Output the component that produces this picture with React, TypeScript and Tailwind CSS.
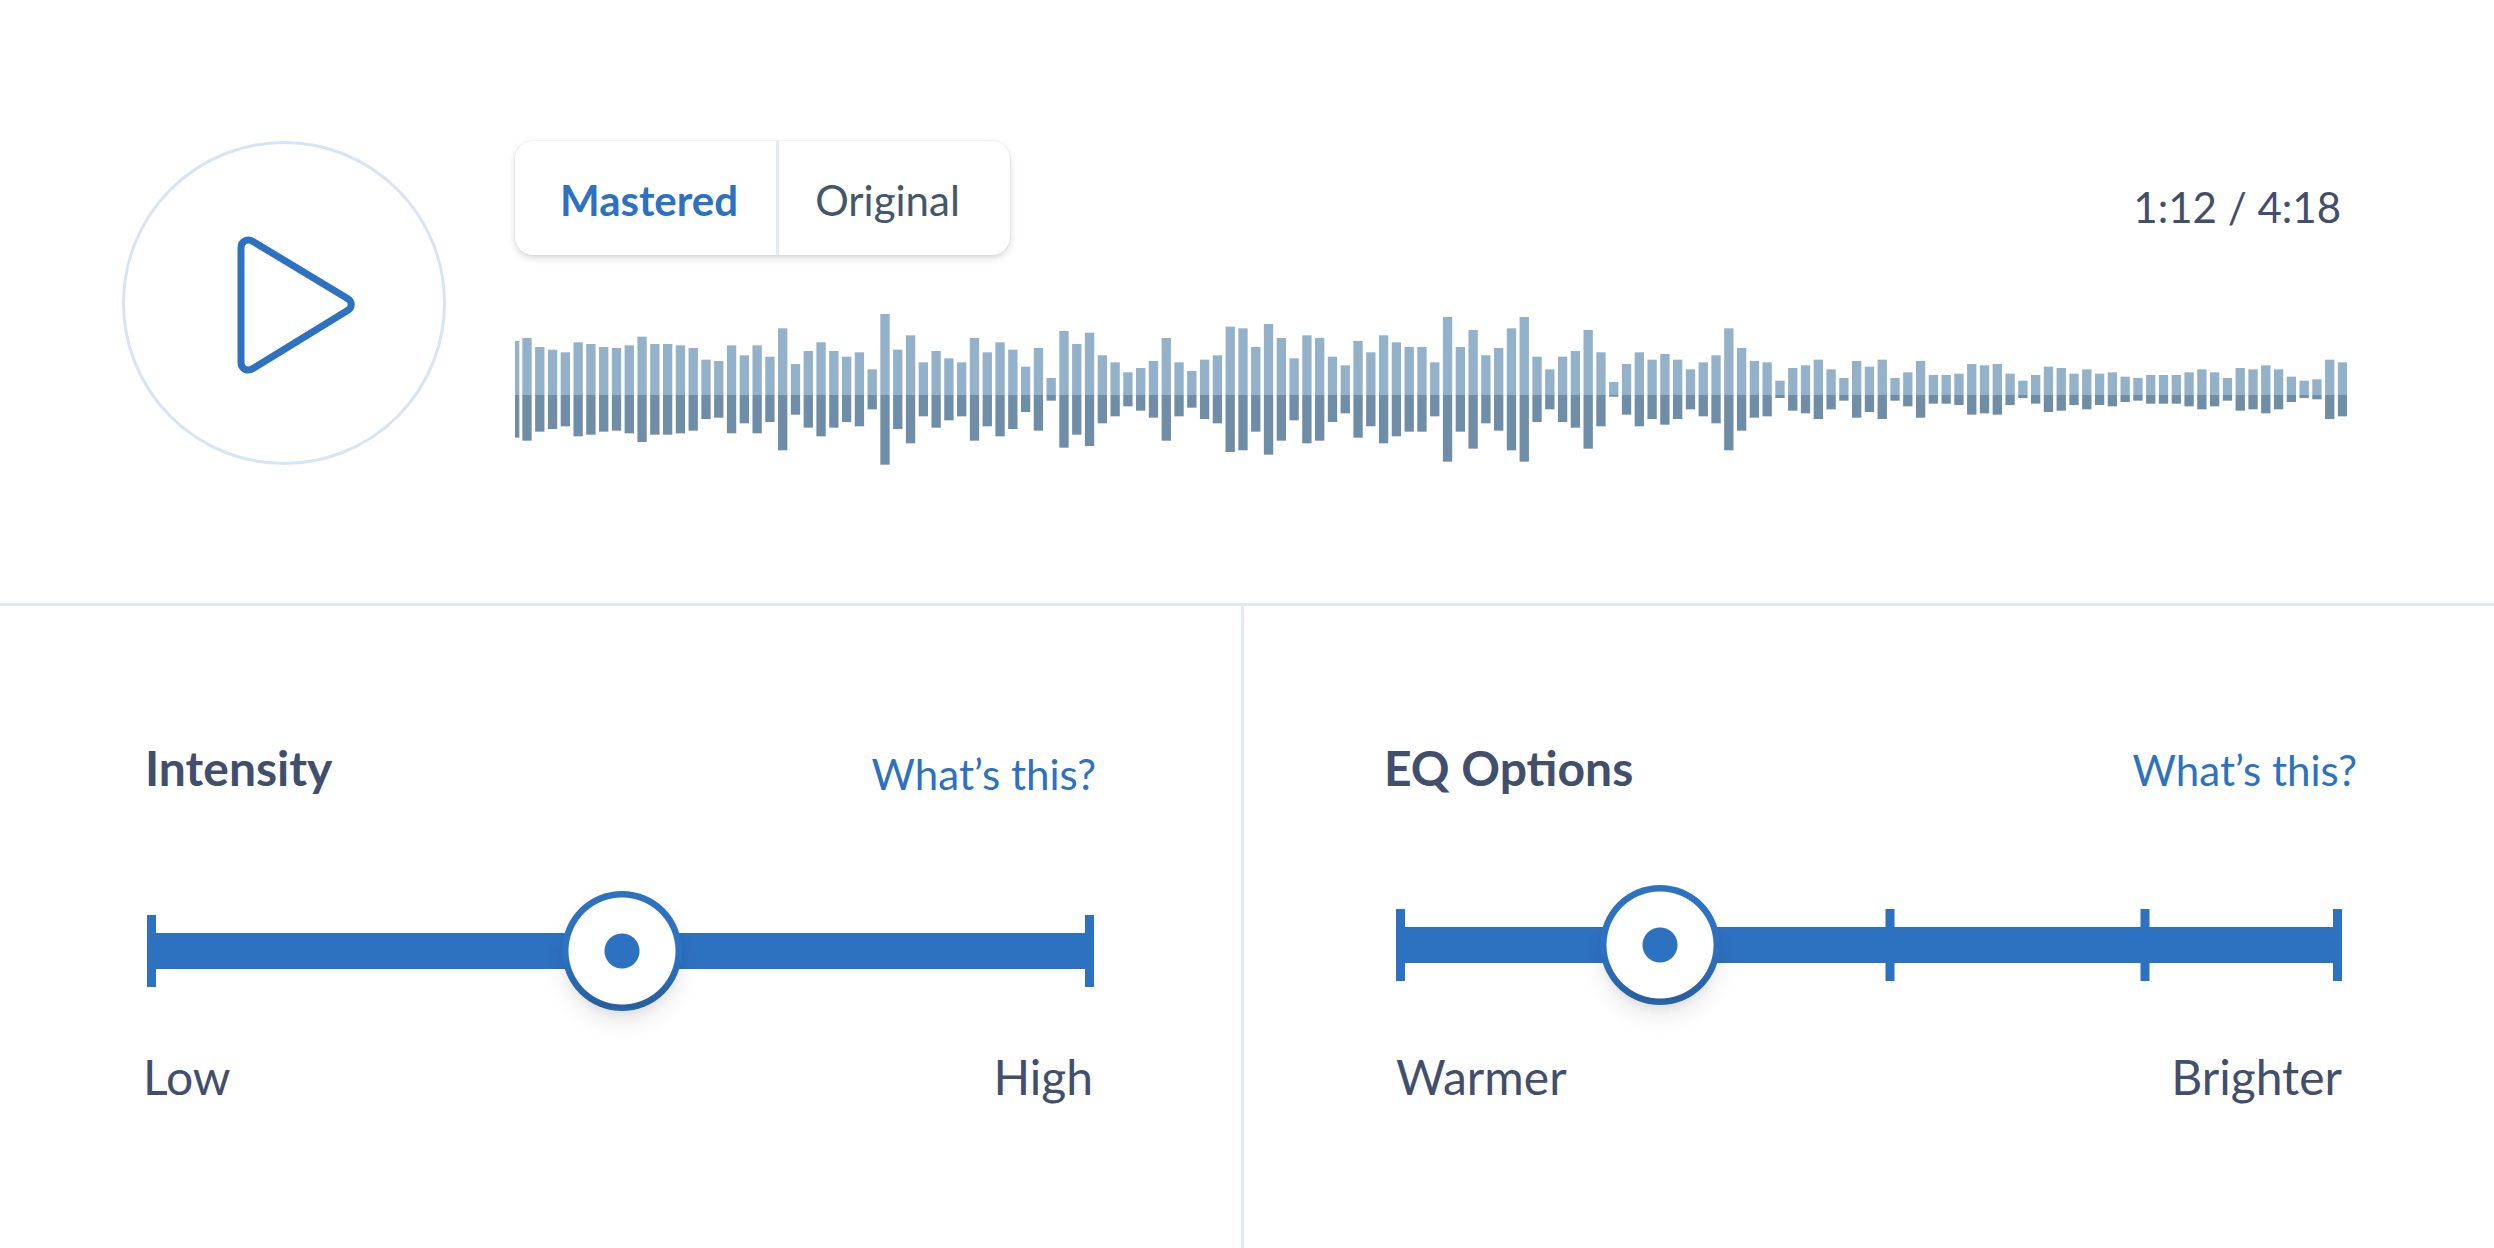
import React, { useState } from "react";

// Top edge of every bar in waveform units; the centre line lies at BASELINE.
const PEAKS = [
  115, 142, 150, 158, 128, 133, 142, 145, 137, 111, 133, 133, 137, 145, 180, 184, 137, 167, 137, 171,
  86, 193, 154, 128, 154, 171, 158, 209, 43, 150, 107, 188, 154, 176, 188, 115, 158, 128, 150, 201,
  145, 235, 94, 133, 99, 167, 188, 218, 205, 184, 115, 188, 214, 180, 167, 81, 86, 142, 73, 115,
  176, 107, 115, 171, 197, 124, 158, 107, 128, 142, 142, 188, 52, 142, 91, 167, 145, 86, 52, 171,
  209, 171, 154, 91, 158, 247, 193, 158, 180, 163, 180, 209, 188, 167, 86, 145, 184, 188, 243, 205,
  197, 180, 209, 235, 184, 201, 180, 235, 218, 184, 226, 226, 222, 193, 197, 193, 222, 243, 226, 201,
  205, 222, 209, 222, 218, 231, 235, 226, 226, 226, 218, 209, 218, 235, 205, 209, 197, 209, 231, 243,
  239, 180, 188,
];
const BASELINE = 286;
const MIRROR_LOSS = 34;
const PITCH = 38.37;

function Bar({ x, width, top }: { x: number; width: number; top: number }) {
  const up = BASELINE - top;
  return (
    <>
      <rect x={x} y={top} width={width} height={up} fill="#94b1ca" />
      <rect x={x} y={BASELINE} width={width} height={up - MIRROR_LOSS} fill="#6f8da7" />
    </>
  );
}

function Waveform() {
  return (
    <svg
      viewBox="0 40 5498 456"
      preserveAspectRatio="none"
      className="block h-[152px] w-full"
      role="img"
      aria-label="Waveform"
    >
      <Bar x={0} width={13} top={124} />
      {PEAKS.map((top, i) => (
        <Bar key={i} x={22 + i * PITCH} width={28} top={top} />
      ))}
    </svg>
  );
}

type SliderProps = { id: string; initial: number; stops?: number[] };

function Slider({ id, initial, stops = [] }: SliderProps) {
  const [value, setValue] = useState(initial);
  return (
    <div className="relative flex h-[120px] items-center">
      <div className="flex h-[72px] w-full items-center justify-between">
        <span className="h-full w-[9px] bg-[#2d71c1]" />
        <span className="h-9 flex-1 bg-[#2d71c1]" />
        <span className="h-full w-[9px] bg-[#2d71c1]" />
      </div>
      {stops.map((stop) => (
        <span
          key={stop}
          className="absolute top-6 h-[72px] w-[9px] -translate-x-1/2 bg-[#2d71c1]"
          style={{ left: `${stop}%` }}
        />
      ))}
      <input
        id={id}
        type="range"
        min={0}
        max={1000}
        value={value}
        onChange={(e) => setValue(Number(e.target.value))}
        className="absolute inset-0 m-0 h-[120px] w-full cursor-pointer appearance-none bg-transparent outline-none [&::-webkit-slider-thumb]:size-[120px] [&::-webkit-slider-thumb]:appearance-none [&::-webkit-slider-thumb]:rounded-full [&::-webkit-slider-thumb]:bg-[radial-gradient(circle,#2d71c1_17px,transparent_18px),radial-gradient(circle,#ffffff_53px,transparent_54px),linear-gradient(#2d71c1_55%,#275f9f_96%,#2b69b1)] [&::-webkit-slider-thumb]:shadow-[0_12px_24px_-4px_rgba(0,0,0,0.12),0_6px_12px_-5px_rgba(0,0,0,0.06)]"
      />
    </div>
  );
}

export default function App() {
  const [version, setVersion] = useState("mastered");
  return (
    <main className="flex min-h-screen flex-col bg-white font-['Lato',sans-serif] text-[#414f6d]">
      <section className="flex gap-[69px] border-b-[3px] border-[#e4eaf2] pt-[141px] pr-[147px] pb-[138px] pl-[122px]">
        <button
          type="button"
          aria-label="Play"
          className="flex size-[324px] shrink-0 items-center justify-center rounded-full border-[3px] border-[#d7e4f3]"
        >
          <svg viewBox="0 0 324 324" className="size-[324px] shrink-0" fill="none" aria-hidden="true">
            <path
              d="M119 106.500V221.500C119 228 125.500 231 131 227.500L225.500 169.500C230.500 166.500 230.500 160.500 225.500 157.500L131 100.500C125.500 97 119 100.500 119 106.500Z"
              stroke="#2d71c1"
              strokeWidth="7"
              strokeLinejoin="round"
            />
          </svg>
        </button>

        <div className="flex min-w-0 flex-1 flex-col justify-between">
          <div className="flex items-end justify-between">
            <div className="flex h-[114px] rounded-[18px] bg-white text-[42px] leading-14 shadow-[0_0_2px_rgba(0,0,0,0.1),0_3px_9px_rgba(0,0,0,0.1),0_3px_6px_rgba(0,0,0,0.06)]">
              <button
                type="button"
                aria-pressed={version === "mastered"}
                onClick={() => setVersion("mastered")}
                className="border-r-[3px] border-[#e4eaf2] pt-1 pr-[38px] pl-[45px] font-bold text-[#2d71c1]"
              >
                Mastered
              </button>
              <button
                type="button"
                aria-pressed={version === "original"}
                onClick={() => setVersion("original")}
                className="pt-1 pr-[50px] pl-9 text-[#44566a]"
              >
                Original
              </button>
            </div>
            <p className="pr-[6px] pb-5 text-[42px] leading-14">1:12 / 4:18</p>
          </div>
          <Waveform />
        </div>
      </section>

      <div className="grid flex-1 grid-cols-[1244fr_1250fr]">
        <section className="border-r-[3px] border-[#e4eaf2] pt-[134px] pb-24">
          <div className="flex items-end justify-between px-[145px]">
            <label htmlFor="intensity" className="text-5xl leading-14 font-bold">
              Intensity
            </label>
            <a href="#intensity" className="text-[42px] leading-[44px] text-[#2d71c1]">
              What’s this?
            </a>
          </div>
          <div className="mt-[95px] px-[147px]">
            <Slider id="intensity" initial={502} />
          </div>
          <div className="mt-[38px] flex justify-between pr-[148px] pl-[143px] text-5xl leading-14">
            <span>Low</span>
            <span>High</span>
          </div>
        </section>

        <section className="pt-[134px] pb-24">
          <div className="flex items-baseline justify-between pr-[137px] pl-[140px]">
            <label htmlFor="eq" className="text-5xl leading-14 font-bold">
              EQ Options
            </label>
            <a href="#eq" className="text-[42px] leading-[44px] text-[#2d71c1]">
              What’s this?
            </a>
          </div>
          <div className="mt-[89px] px-[152px]">
            <Slider id="eq" initial={247} stops={[52.2, 79.2]} />
          </div>
          <div className="mt-[44px] flex justify-between px-[152px] text-5xl leading-14">
            <span>Warmer</span>
            <span>Brighter</span>
          </div>
        </section>
      </div>
    </main>
  );
}
